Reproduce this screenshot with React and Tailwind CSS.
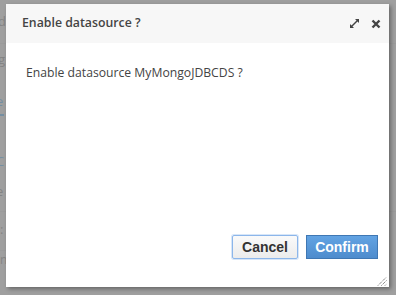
import React from 'react';

const ExpandIcon = () => (
    <svg width="11" height="11" viewBox="0 0 11 11" fill="none">
        <path d="M2 9 L9 2" stroke="#444" strokeWidth="1.4" />
        <path d="M1 6 V10 H5 Z" fill="#444" />
        <path d="M6 1 H10 V5 Z" fill="#444" />
    </svg>
);

const CloseIcon = () => (
    <svg width="10" height="10" viewBox="0 0 10 10" fill="none">
        <path d="M1.5 1.5 L8.5 8.5 M8.5 1.5 L1.5 8.5" stroke="#444" strokeWidth="2.4" />
    </svg>
);

const ResizeGrip = () => (
    <svg width="10" height="10" viewBox="0 0 10 10" fill="none">
        <path d="M1 9.5 L9.5 1 M4.5 9.5 L9.5 4.5 M8 9.5 L9.5 8" stroke="#555" strokeWidth="1" strokeDasharray="1 1" />
    </svg>
);

const App = () => {
    return (
        <div className="relative w-[396px] h-[295px] overflow-hidden bg-[#a3a3a3] font-['Open_Sans',sans-serif]">
            {/* Page behind the overlay */}
            <div className="flex flex-col text-[13px] text-[#5f5f5f]">
                <div className="h-[44px] border-b border-[#999] pt-[12px] -ml-[2px]">d</div>
                <div className="h-[36px] pt-[6px] -ml-[2px]">g</div>
                <div className="h-[36px] pt-[12px] -ml-[4px] text-[#3b7cab] border-b-2 border-[#3b7cab] w-[8px]">e</div>
                <div className="h-[60px] pt-[36px] -ml-[4px] text-[#3b7cab]">C</div>
                <div className="h-[36px] pt-[6px] -ml-[4px] border-b border-[#999]">e</div>
                <div className="h-[36px] pt-[8px]">:</div>
                <div className="border-t border-[#999] mt-[2px] flex justify-between w-[200px] text-[12px]">
                    <span>nbuen:</span>
                    <span>false</span>
                </div>
            </div>
            <div className="absolute inset-0 bg-[#9c9c9c]/60" />

            {/* Dialog */}
            <div className="absolute left-[6px] top-[4px] w-[383px] h-[283px] bg-white flex flex-col shadow-[2px_2px_4px_rgba(0,0,0,0.35)]">
                <div className="h-[39px] bg-[#f7f7f7] flex items-center pl-[16px] pr-[8px]">
                    <span className="text-[12.3px] font-semibold text-[#444]">Enable datasource ?</span>
                    <div className="ml-auto flex items-center gap-[11px]">
                        <ExpandIcon />
                        <CloseIcon />
                    </div>
                </div>
                <div className="flex-1 flex flex-col pl-[20px] pr-[11px] pt-[21px]">
                    <p className="text-[12.2px] text-[#444]">Enable datasource MyMongoJDBCDS ?</p>
                    <div className="mt-auto mb-[28px] flex justify-end gap-[8px]">
                        <button className="h-[24px] w-[66px] border border-[#8cb6ea] rounded-[2px] bg-gradient-to-b from-[#fafafa] to-[#ececec] text-[14px] font-bold text-[#333] font-['Liberation_Sans',sans-serif] shadow-[0_0_0_1px_rgba(140,182,234,0.35)]">
                            Cancel
                        </button>
                        <button className="h-[24px] w-[72px] border border-[#3f77b3] bg-gradient-to-b from-[#62a3e3] to-[#4e8ccd] text-[14px] font-bold text-white font-['Liberation_Sans',sans-serif]">
                            Confirm
                        </button>
                    </div>
                </div>
                <div className="absolute right-[2px] bottom-[1px]">
                    <ResizeGrip />
                </div>
            </div>
        </div>
    );
};

export default App;
